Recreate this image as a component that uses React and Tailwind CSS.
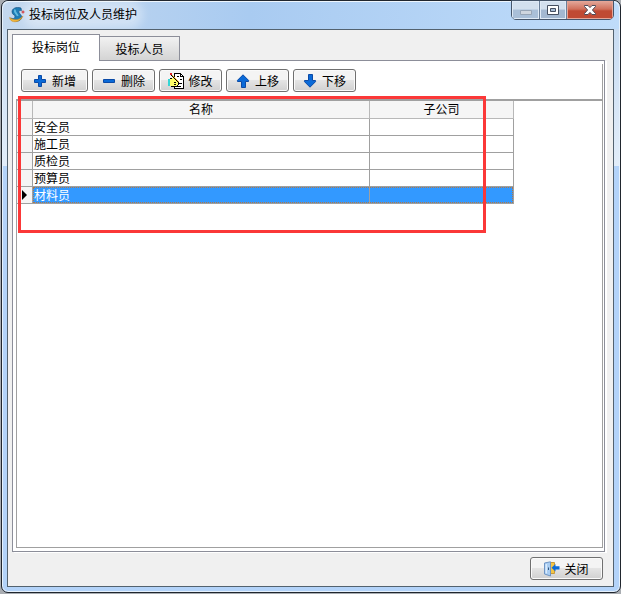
import React, { useState } from 'react';

const tabs = ['投标岗位', '投标人员'];

const initialRows = [
  { id: 1, name: '安全员', company: '' },
  { id: 2, name: '施工员', company: '' },
  { id: 3, name: '质检员', company: '' },
  { id: 4, name: '预算员', company: '' },
  { id: 5, name: '材料员', company: '' },
];

// --- ICONS ---
const AppIcon = () => (
  <svg className="relative" width="16" height="16" viewBox="0 0 16 16" aria-hidden="true">
    <path d="M12 1 C7 -0.5 3 1.5 3 4.8 C3 8 6.5 8 6 10 C5.6 11.6 4 12 1.5 11 C5 15.5 12 15 12.6 10.5 C13 7.8 10 6.5 9.8 5 C9.7 3.8 10.8 3.4 12.5 3.6 Z" fill="#1f7db5" stroke="#0f4c7c" strokeWidth="0.6" />
    <path d="M6 2.5 C5 5.2 7.5 6 8.8 9" fill="none" stroke="#62bbe0" strokeWidth="1.8" />
    <path d="M0.6 10.5 C1 16.4 11 16.4 14 9 C11 13 5 14 0.6 10.5 Z" fill="#f2b63c" stroke="#c98716" strokeWidth="0.5" />
    <path d="M14 3.5 V6.5 M12.5 5 H15.5" stroke="#d42a2a" strokeWidth="1" />
  </svg>
);

const PlusIcon = () => (
  <svg width="14" height="14" viewBox="0 0 14 14" aria-hidden="true">
    <path d="M5.5 1.5 H8.5 V5.5 H12.5 V8.5 H8.5 V12.5 H5.5 V8.5 H1.5 V5.5 H5.5 Z" fill="#0a6ad8" stroke="#0b4aa6" />
  </svg>
);

const MinusIcon = () => (
  <svg width="14" height="14" viewBox="0 0 14 14" aria-hidden="true">
    <path d="M1.5 5.5 H12.5 V8.5 H1.5 Z" fill="#0a6ad8" stroke="#0b4aa6" />
  </svg>
);

const EditIcon = () => (
  <svg width="16" height="16" viewBox="0 0 16 16" shapeRendering="crispEdges" aria-hidden="true">
    {/* page */}
    <path d="M6 0 H13 V1 H14 V2 H15 V3 H16 V16 H6 Z" fill="#000" />
    <path d="M7 1 H12 V4 H15 V15 H7 Z" fill="#fff" />
    <path d="M13 2 H14 V3 H13 Z" fill="#fff" />
    <path d="M9 3.5 H11 M12 6.5 H14 M12 10.5 H14 M10 13.5 H13" stroke="#000" />
    {/* hand */}
    <path d="M2 6 H4 V5 H8 V7 H10 V8 H11 V10 H10 V12 H9 V14 H3 V13 H2 Z" fill="#ffff66" />
    <path d="M2 5.5 H4 M3 13.5 H9 M6 9.5 H8 M6 11.5 H8 M10.5 10 V12 M9.5 12 V14" stroke="#000" />
    <path d="M0 6 H2 V13 H0 Z" fill="#35d5d5" />
    {/* pencil */}
    <path d="M3 2 H4 V3 H5 V4 H6 V5 H7 V6 H8 V7 H9 V8 H10 V9 H11 V10 H12 V11 H11 V10 H10 V9 H9 V8 H8 V7 H7 V6 H6 V5 H5 V4 H4 V3 H3 Z" fill="#000" />
    <path d="M4 2 H5 V3 H6 V4 H7 V5 H8 V6 H9 V7 H10 V8 H11 V9 H10 V8 H9 V7 H8 V6 H7 V5 H6 V4 H5 V3 H4 Z" fill="#ffb830" />
    <path d="M2 0 H4 V2 H2 Z" fill="#e02020" />
  </svg>
);

const UpIcon = () => (
  <svg width="14" height="14" viewBox="0 0 14 14" aria-hidden="true">
    <path d="M7 0.8 L12.5 6.3 V7.5 H9.5 V13.5 H5.5 V7.5 H1.5 V6.3 Z" fill="#0a6ad8" stroke="#0b4aa6" />
  </svg>
);

const DownIcon = () => (
  <svg width="14" height="14" viewBox="0 0 14 14" aria-hidden="true">
    <path d="M7 13.2 L12.5 7.7 V6.5 H9.5 V0.5 H5.5 V6.5 H1.5 V7.7 Z" fill="#0a6ad8" stroke="#0b4aa6" />
  </svg>
);

const DoorIcon = () => (
  <svg width="16" height="16" viewBox="0 0 16 16" aria-hidden="true">
    <path d="M6 1.5 H10.5 V12.5 H6 Z" fill="#f3c546" stroke="#c79a3a" />
    <path d="M0.5 2 L6.5 0.8 V15 L0.5 13 Z" fill="#a9cdf2" stroke="#6f95c4" />
    <path d="M1.5 3.2 L3 2.9 V12.6 L1.5 12.2 Z" fill="#dcecfb" />
    <path d="M4.5 6.5 V9" stroke="#33587f" />
    <path d="M7.5 6.8 L11.5 3 V5.2 H15.5 V8.4 H11.5 V10.6 Z" fill="#0a6ad8" />
  </svg>
);

const ToolButton = ({ icon, label, onClick, className }) => (
  <button
    type="button"
    onClick={onClick}
    className={`flex h-[23px] items-center justify-center rounded-[3px] border border-[#707070] bg-linear-to-b from-[#f4f4f4] from-45% via-[#e4e4e4] via-50% to-[#d0d0d0] whitespace-nowrap shadow-[inset_0_0_0_1px_#fafafa] ${className}`}
  >
    {icon}
    <span className="pt-0.5">{label}</span>
  </button>
);

const App = () => {
  const [activeTab, setActiveTab] = useState(0);
  const [rows, setRows] = useState(initialRows);
  const [selected, setSelected] = useState(5);

  // --- MOVE SELECTED ROW ---
  const moveRow = (step) => {
    const from = rows.findIndex((r) => r.id === selected);
    const to = from + step;
    if (from < 0 || to < 0 || to >= rows.length) return;
    const next = [...rows];
    [next[from], next[to]] = [next[to], next[from]];
    setRows(next);
  };

  const addRow = () => {
    const name = window.prompt('名称');
    if (name) setRows([...rows, { id: Date.now(), name, company: '' }]);
  };

  const editRow = () => {
    const name = window.prompt('名称');
    if (name) setRows(rows.map((r) => (r.id === selected ? { ...r, name } : r)));
  };

  const removeRow = () => setRows(rows.filter((r) => r.id !== selected));

  return (
    <div className="flex min-h-screen bg-[#a9adb2] pb-px pl-px font-['Liberation_Sans','Noto_Sans_CJK_SC',sans-serif] text-[12px] leading-4 text-black">
      {/* WINDOW FRAME */}
      <div className="flex flex-1 flex-col rounded-[7px] border border-[#20262e] bg-linear-to-b from-[#c3d9f1] via-[#e2edf9] via-28% to-[#b3d3f9] to-28% pr-[6px] pb-[5px] pl-[5px] shadow-[inset_0_0_0_1px_#e6f1fc]">

        {/* TITLE BAR */}
        <div className="-mr-[5px] -ml-1 flex h-7 items-start justify-between rounded-t-md bg-linear-to-r from-[#c4d8ee] via-[#a9cbf1] via-40% to-[#bfdcfa] pr-[5px] pl-[6px] shadow-[inset_0_1px_0_#eef6fd]">
          <div className="flex items-center gap-1 pt-[5px]">
            <AppIcon />
            <h1 className="rounded-full bg-white/35 pt-px shadow-[0_0_8px_6px_rgba(255,255,255,0.35)]">投标岗位及人员维护</h1>
          </div>
          <div className="-mt-px flex h-5 overflow-hidden rounded-b-[5px] border border-[#46566b]">
            <button type="button" aria-label="最小化" className="flex w-7 items-center justify-center border-r border-[#6a7f99] bg-linear-to-b from-[#d3e0ee] from-45% to-[#a9bfd8] to-50% pt-1 shadow-[inset_0_0_0_1px_#dfeaf6]">
              <svg width="12" height="5" viewBox="0 0 12 5"><path d="M0.5 0.5 H11.5 V4.5 H0.5 Z" fill="#cfd6df" stroke="#97a5b6" /></svg>
            </button>
            <button type="button" aria-label="最大化" className="flex w-[27px] items-center justify-center border-r border-[#6a7f99] bg-linear-to-b from-[#d3e0ee] from-45% to-[#a3b8d1] to-50% shadow-[inset_0_0_0_1px_#dfeaf6]">
              <svg width="12" height="10" viewBox="0 0 12 10"><path d="M0.5 0.5 H11.5 V9.5 H0.5 Z" fill="#fff" stroke="#454f60" /><path d="M3.5 3.5 H8.5 V6.5 H3.5 Z" fill="#a9bdd5" stroke="#454f60" /></svg>
            </button>
            <button type="button" aria-label="关闭窗口" className="flex w-[46px] items-center justify-center bg-linear-to-b from-[#e3a99c] via-[#d0705c] via-45% to-[#c04a33] to-55% shadow-[inset_0_0_0_1px_#e5a597]">
              <svg width="12" height="10" viewBox="0 0 12 10"><path d="M0.5 0.5 H4 L6 2.6 L8 0.5 H11.5 V1.5 L8.4 5 L11.5 8.5 V9.5 H8 L6 7.4 L4 9.5 H0.5 V8.5 L3.6 5 L0.5 1.5 Z" fill="#fff" stroke="#4e4b58" /></svg>
            </button>
          </div>
        </div>

        {/* CLIENT AREA */}
        <div className="flex flex-1 flex-col border border-[#53626f] bg-[#f0f0f0] pt-1 pr-2 pb-[5px] pl-1">
          <div role="tablist" className="flex items-end">
            {tabs.map((tab, i) => (
              <button
                key={tab}
                type="button"
                role="tab"
                aria-selected={activeTab === i}
                onClick={() => setActiveTab(i)}
                className={activeTab === i
                  ? 'relative z-10 -mb-px h-[27px] w-[88px] border border-b-0 border-[#8c8e99] bg-white'
                  : '-ml-px h-6 w-[81px] border border-b-0 border-[#8c8e99] bg-linear-to-b from-[#f2f2f2] to-[#d4d4d4] pt-0.5'}
              >
                {tab}
              </button>
            ))}
          </div>

          <div className="flex flex-1 flex-col border border-[#8c8e99] bg-white py-[3px] pr-px pl-[3px] shadow-[2px_1px_0_#fff]">
            <div className="flex flex-1 flex-col border-r border-[#a0a0a0]">
              {/* TOOLBAR */}
              <div className="flex gap-1 pt-[5px] pb-[7px] pl-[5px]">
                <ToolButton icon={<PlusIcon />} label="新增" onClick={addRow} className="w-[67px] gap-[5px]" />
                <ToolButton icon={<MinusIcon />} label="删除" onClick={removeRow} className="w-[63px] gap-[5px]" />
                <ToolButton icon={<EditIcon />} label="修改" onClick={editRow} className="w-[63px] gap-1" />
                <ToolButton icon={<UpIcon />} label="上移" onClick={() => moveRow(-1)} className="w-[63px] gap-[5px]" />
                <ToolButton icon={<DownIcon />} label="下移" onClick={() => moveRow(1)} className="w-[63px] gap-[5px]" />
              </div>

              {/* GRID */}
              <div className="relative flex-1 border-t-2 border-b border-l border-[#a0a0a0]">
                <table className="w-[497px] table-fixed border-separate border-spacing-0">
                  <colgroup>
                    <col className="w-4" />
                    <col className="w-[337px]" />
                    <col className="w-36" />
                  </colgroup>
                  <thead>
                    <tr className="h-[18px] bg-[#f5f5f5]">
                      <td className="border-r border-b border-[#b8b8b8] p-0"></td>
                      <th className="border-r border-b border-[#b8b8b8] p-0 font-normal">名称</th>
                      <th className="border-r border-b border-[#b8b8b8] p-0 font-normal">子公司</th>
                    </tr>
                  </thead>
                  <tbody>
                    {rows.map((row) => {
                      const on = row.id === selected;
                      return (
                        <tr key={row.id} onClick={() => setSelected(row.id)}>
                          <td className="border-r border-b border-[#a0a0a0] bg-[#f5f5f5] p-0">
                            {on && (
                              <svg className="ml-[5px]" width="6" height="10" viewBox="0 0 6 10" aria-hidden="true">
                                <path d="M0 0 L5 5 L0 10 Z" fill="#000" />
                              </svg>
                            )}
                          </td>
                          <td className={`border-r border-b border-[#a0a0a0] p-0 ${on ? 'bg-[#3399ff] text-white' : ''}`}>
                            <div className={`flex h-4 items-center border-y border-l border-dotted pt-0.5 ${on ? 'border-[#b07848]' : 'border-transparent'}`}>{row.name}</div>
                          </td>
                          <td className={`border-r border-b border-[#a0a0a0] p-0 ${on ? 'bg-[#3399ff] text-white' : ''}`}>
                            <div className={`flex h-4 items-center border-y border-r border-dotted pt-0.5 ${on ? 'border-[#b07848]' : 'border-transparent'}`}>{row.company}</div>
                          </td>
                        </tr>
                      );
                    })}
                  </tbody>
                </table>

                {/* Highlight frame over the list */}
                <div className="pointer-events-none absolute -top-[5px] left-px h-[137px] w-[468px] border-3 border-[#fb3838]"></div>
              </div>
            </div>
          </div>

          <div className="flex justify-end pt-[5px] pr-0.5 pb-px">
            <ToolButton icon={<DoorIcon />} label="关闭" onClick={() => window.close()} className="w-[73px] gap-1" />
          </div>
        </div>
      </div>
    </div>
  );
};

export default App;
